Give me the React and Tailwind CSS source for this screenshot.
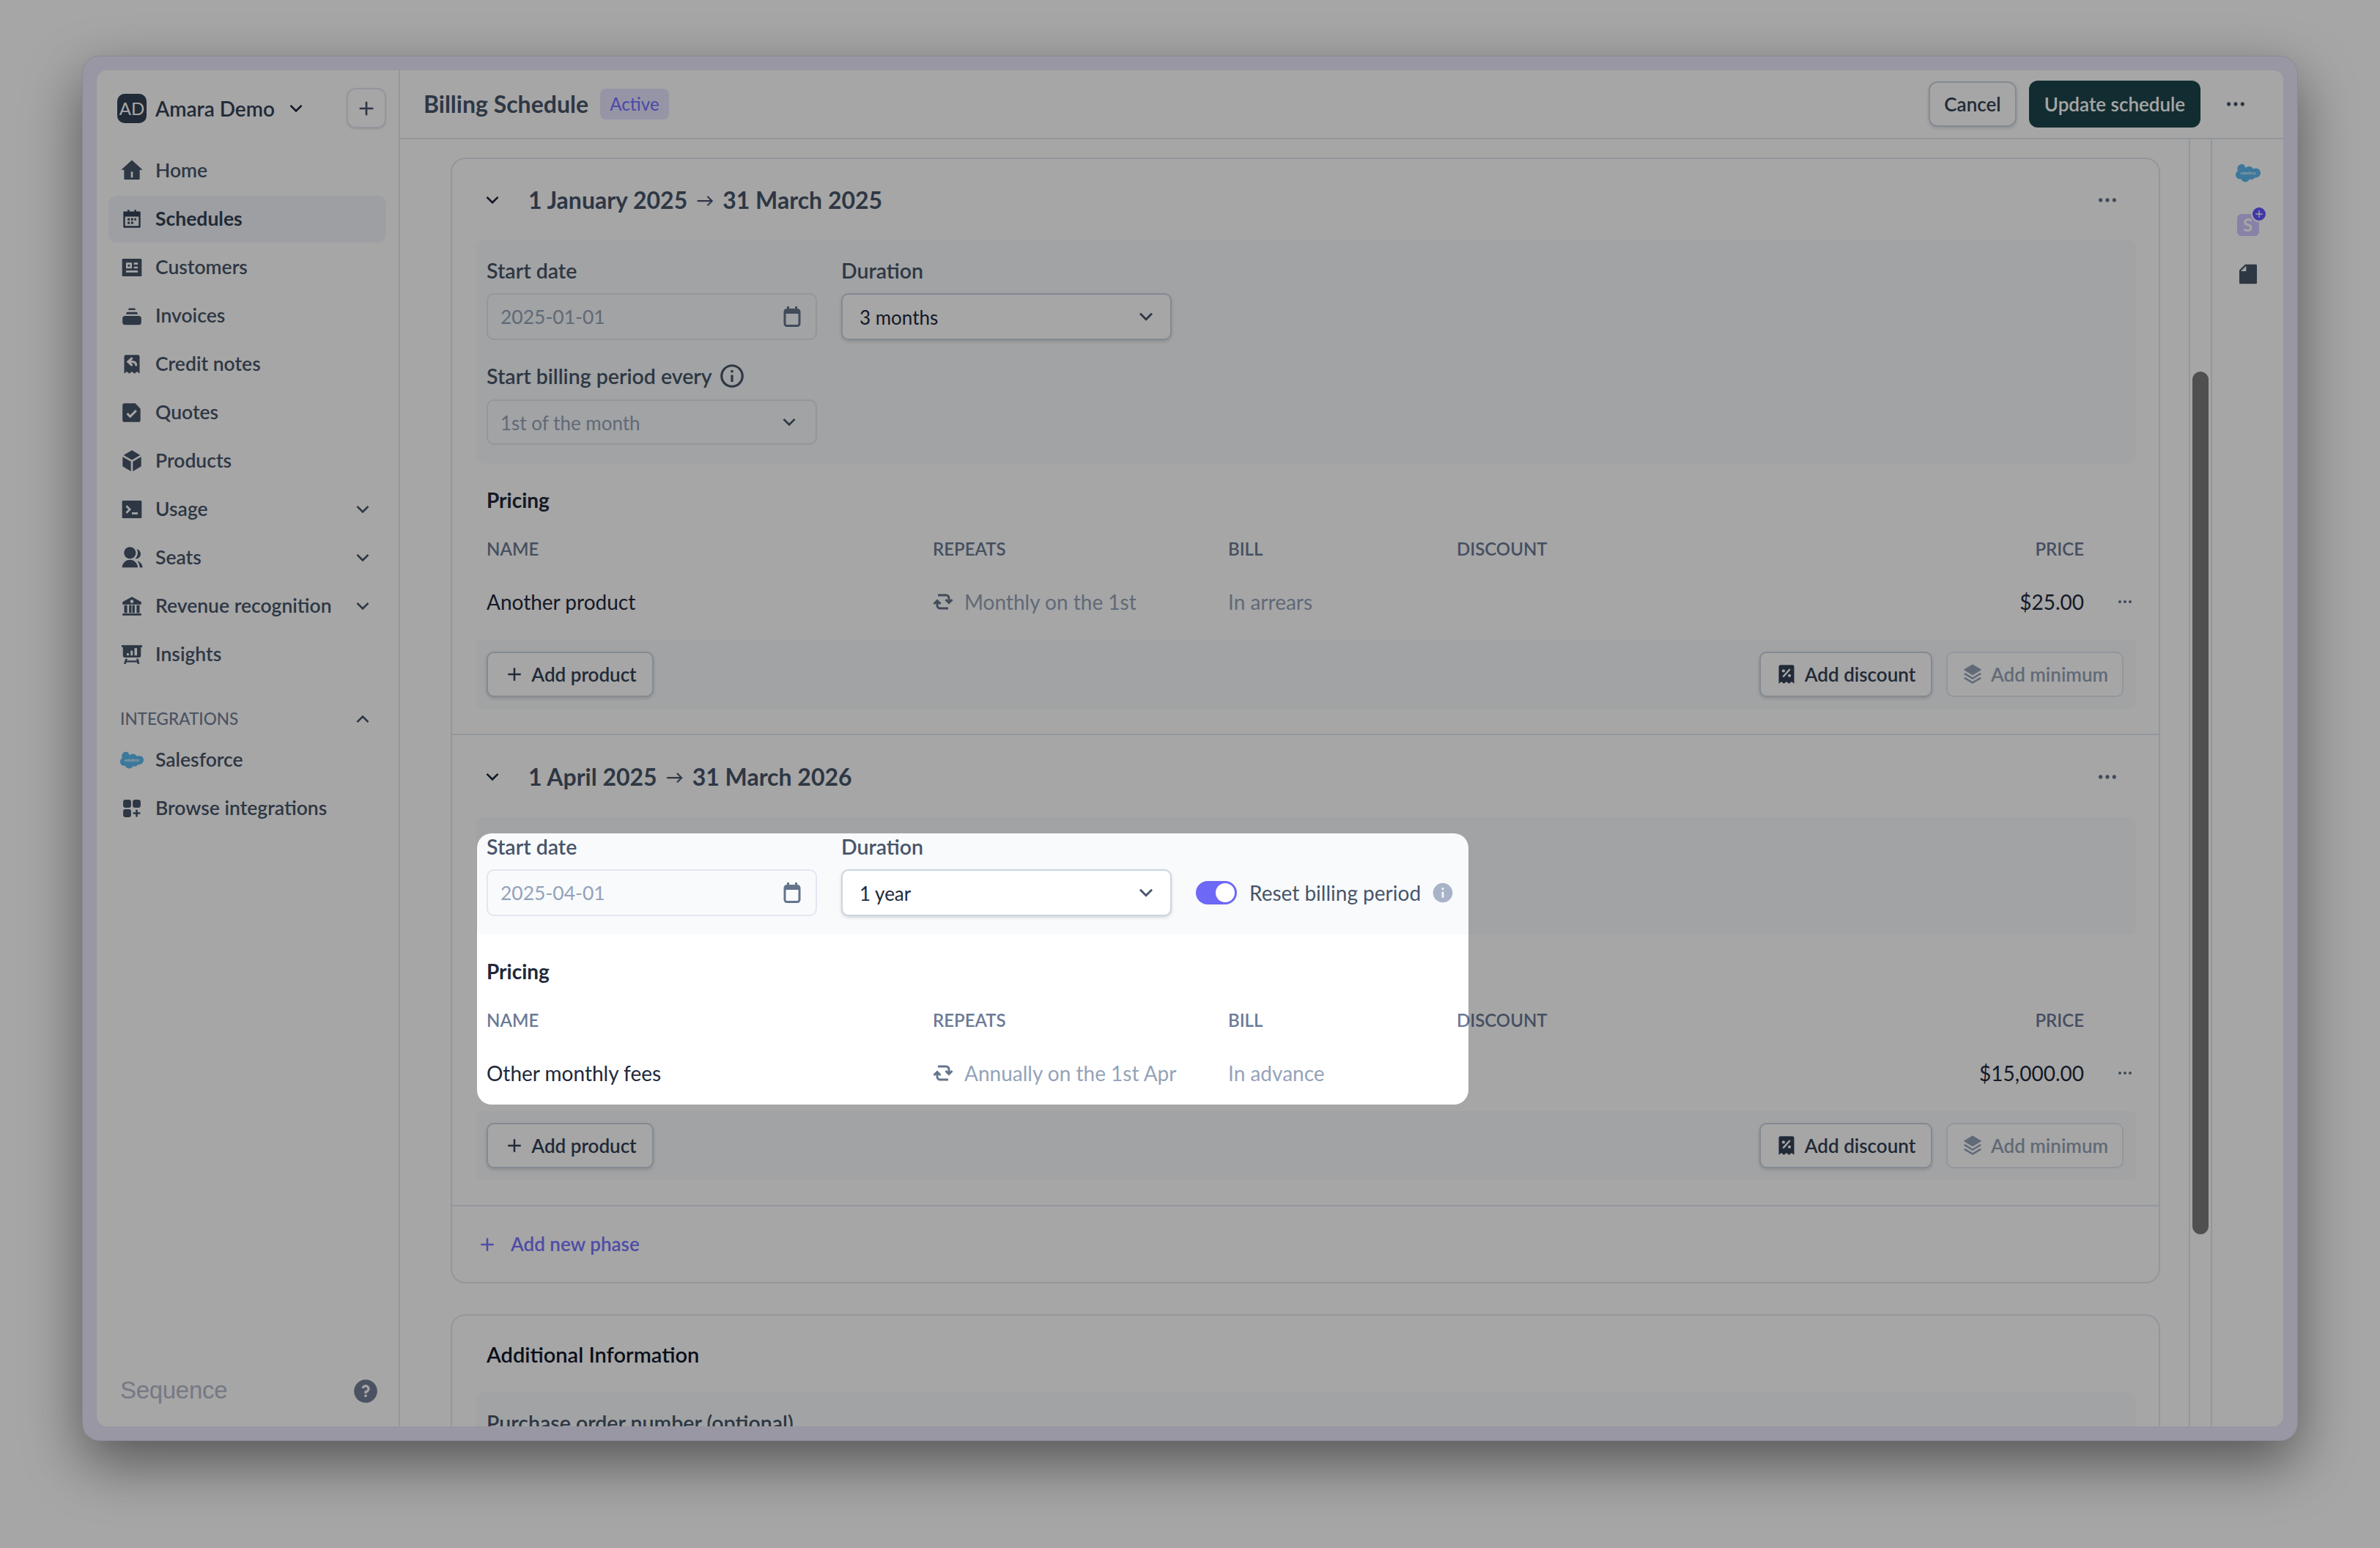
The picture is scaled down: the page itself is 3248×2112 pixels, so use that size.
import {
  RiAddLine, RiArrowDownSLine, RiArrowUpSLine, RiBox3Fill,
  RiFileFill, RiGroupFill, RiHome4Fill, RiInformationFill, RiInformationLine,
  RiMoreFill, RiProfileFill, RiQuestionFill, RiStackFill, RiTerminalBoxFill,
} from 'react-icons/ri'

const font = { fontFamily: 'Lato, "Liberation Sans", sans-serif' }

function SalesforceLogo({ className }) {
  return (
    <svg viewBox="0 0 40 28" className={className}>
      <path fill="#5cb8ee" d="M16 6c1.500-1.600 3.500-2.500 5.700-2.500 2.900 0 5.400 1.600 6.800 4 1.200-.5 2.500-.8 3.800-.8 5 0 8 3.400 7.700 7.700-.3 4.100-3.500 7.200-7.700 7.200-.6 0-1.200-.1-1.700-.2-1.100 2-3.200 3.300-5.600 3.300-1 0-2-.2-2.800-.7-1.100 2.600-3.700 4.400-6.700 4.400-3.100 0-5.800-2-6.800-4.700-.4.100-.9.100-1.400.1C3.100 23.800 0 20.700 0 16.800c0-2.600 1.400-4.900 3.500-6.100C3 9.600 2.800 8.400 2.800 7.200 2.800 3 6.200 0 10.400 0 12.900 0 14.800 2.200 16 6z" />
      <text x="20" y="16" textAnchor="middle" fontSize="6" fill="#fff" fontFamily="Lato, sans-serif" fontStyle="italic">salesforce</text>
    </svg>
  )
}

function ScheduleIcon({ className }) {
  return (
    <svg viewBox="0 0 24 24" className={className} fill="currentColor">
      <path d="M7 1h2v3H7zM15 1h2v3h-2z" />
      <path fillRule="evenodd" d="M3 3h18a1 1 0 0 1 1 1v17a1 1 0 0 1-1 1H3a1 1 0 0 1-1-1V4a1 1 0 0 1 1-1zm1 6v11h16V9z" />
      <path d="M7 11h2.500v2.500H7zM11 11h2.500v2.500H11zM15 11h2v2.500h-2zM7 15h2.500v2.500H7zM11 15h2.500v2.500H11z" />
    </svg>
  )
}

function InvoiceIcon({ className }) {
  return (
    <svg viewBox="0 0 24 24" className={className} fill="currentColor">
      <path d="M8.500 3h7l.8 2.200H7.700zM6 7.500h12l1 2.500H5z" />
      <rect x="1" y="12" width="22" height="10.500" rx="3" />
    </svg>
  )
}

function CreditNoteIcon({ className }) {
  return (
    <svg viewBox="0 0 24 24" className={className}>
      <path fill="currentColor" d="M5 1h14a2 2 0 0 1 2 2v20l-3-2.500-3 2.500-3-2.500L9 23l-3-2.500L3 23V3a2 2 0 0 1 2-2z" />
      <path fill="none" stroke="#fff" strokeWidth="2.600" d="M12.500 4.500 7.500 9l5 4.500M8 9h4.500c3 0 4.500 1.800 4.500 5" />
    </svg>
  )
}

function QuoteIcon({ className }) {
  return (
    <svg viewBox="0 0 24 24" className={className}>
      <path fill="currentColor" d="M3.500 1H16l6 6.500v13a2.500 2.500 0 0 1-2.500 2.500h-16A2.500 2.500 0 0 1 1 20.500v-17A2.500 2.500 0 0 1 3.500 1z" />
      <path fill="none" stroke="#fff" strokeWidth="2.600" d="M6.500 13l3.500 3.500 7-7" />
    </svg>
  )
}

function BankIcon({ className }) {
  return (
    <svg viewBox="0 0 24 24" className={className}>
      <path fill="currentColor" fillRule="evenodd" d="M12 1 23 7v3H1V7zm0 3.500a2 2 0 1 0 0 4 2 2 0 0 0 0-4zM3 11h3.500v9H3zM8.700 11h2.800v9H8.700zM12.500 11h2.800v9h-2.800zM17.500 11H21v9h-3.500zM1 20.500h22V23H1z" />
    </svg>
  )
}

function InsightsIcon({ className }) {
  return (
    <svg viewBox="0 0 24 24" className={className}>
      <path fill="currentColor" d="M0 1h24v2.500h-1.500v10a2 2 0 0 1-2 2h-17a2 2 0 0 1-2-2v-10H0zM4.500 17h2.500l-1 2h12l-1-2h2.500l1.500 6h-2.500l-.7-2H5.700L5 23H2.500z" />
      <path fill="#fff" d="M6 10.500h2.500V13H6zM10.500 7.500H13V13h-2.500zM15 4.500h3V13h-3z" />
    </svg>
  )
}

function BrowseIcon({ className }) {
  return (
    <svg viewBox="0 0 24 24" className={className} fill="currentColor">
      <rect x="1" y="1" width="10" height="10" rx="3" />
      <rect x="13" y="1" width="10" height="10" rx="3" />
      <rect x="1" y="13" width="10" height="10" rx="3" />
      <path d="M16.800 13.500h2.400v3.300h3.300v2.400h-3.300v3.300h-2.400v-3.300h-3.300v-2.400h3.300z" />
    </svg>
  )
}

function DiscountIcon({ className }) {
  return (
    <svg viewBox="0 0 24 24" className={className}>
      <path fill="currentColor" d="M5 1h14a2 2 0 0 1 2 2v20l-3-2.500-3 2.500-3-2.500L9 23l-3-2.500L3 23V3a2 2 0 0 1 2-2z" />
      <path stroke="#fff" strokeWidth="2.200" d="M16 6 8 15" />
      <circle cx="8.500" cy="8" r="1.800" fill="#fff" />
      <circle cx="15.500" cy="13.500" r="1.800" fill="#fff" />
    </svg>
  )
}

function CalendarIcon() {
  return (
    <svg viewBox="0 0 24 28" className="h-[28px] w-[24px] text-[#64748b]">
      <path fill="currentColor" d="M5 0h3v4H5zM16 0h3v4h-3z" />
      <rect x="2" y="4.500" width="20" height="22" rx="3" fill="none" stroke="currentColor" strokeWidth="3" />
      <path fill="currentColor" d="M2 5h20v5H2z" />
    </svg>
  )
}

function RepeatIcon() {
  return (
    <svg viewBox="0 0 28 24" className="mr-[15px] h-[24px] w-[28px] text-[#64748b]" fill="none" stroke="currentColor" strokeWidth="3">
      <path d="M7 3h11a4 4 0 0 1 4 4v6M17.500 9l4.500 4.500L26.500 9" />
      <path d="M21 21H10a4 4 0 0 1-4-4v-6M1.500 15 6 10.500l4.500 4.500" />
    </svg>
  )
}

function StripeIcon() {
  return (
    <div className="relative flex h-[30px] w-[30px] items-center justify-center rounded-[6px] bg-[#cfc8ff] text-[24px] font-bold text-white">
      S
      <span className="absolute right-[-11px] top-[-11px] flex h-[22px] w-[22px] items-center justify-center rounded-full border-2 border-white bg-[#6557ff]">
        <RiAddLine className="h-[16px] w-[16px]" />
      </span>
    </div>
  )
}

const ri = 'h-[32px] w-[32px]'
const custom = 'h-[28px] w-[28px]'

const nav = [
  { label: 'Home', icon: RiHome4Fill, size: ri },
  { label: 'Schedules', icon: ScheduleIcon, size: custom, active: true },
  { label: 'Customers', icon: RiProfileFill, size: ri },
  { label: 'Invoices', icon: InvoiceIcon, size: custom },
  { label: 'Credit notes', icon: CreditNoteIcon, size: custom },
  { label: 'Quotes', icon: QuoteIcon, size: custom },
  { label: 'Products', icon: RiBox3Fill, size: ri },
  { label: 'Usage', icon: RiTerminalBoxFill, size: ri, more: true },
  { label: 'Seats', icon: RiGroupFill, size: ri, more: true },
  { label: 'Revenue recognition', icon: BankIcon, size: custom, more: true },
  { label: 'Insights', icon: InsightsIcon, size: custom },
]

function NavItem({ item }) {
  const Icon = item.icon
  return (
    <div className={`flex h-[64px] items-center rounded-[12px] pl-[16px] pr-[16px] text-[26.500px] ${item.active ? 'bg-[#f1f5f9] font-bold text-[#334155]' : 'font-semibold text-[#475569]'}`}>
      <span className="flex h-[32px] w-[32px] shrink-0 items-center justify-center">
        <Icon className={item.size} />
      </span>
      <span className="ml-[16px] flex-1">{item.label}</span>
      {item.more && <RiArrowDownSLine className="h-[32px] w-[32px]" />}
    </div>
  )
}

function Sidebar() {
  return (
    <aside className="flex w-[414px] shrink-0 flex-col border-r-2 border-[#e2e8f0] pl-[16px] pr-[17px]">
      <div className="flex h-[79px] items-end">
        <div className="flex h-[55px] w-full items-center pl-[12px]">
          <span className="flex h-[40px] w-[40px] items-center justify-center rounded-[10px] bg-[#334155] text-[24px] text-white">AD</span>
          <span className="ml-[12px] text-[28px] font-semibold text-[#334155]">Amara Demo</span>
          <RiArrowDownSLine className="ml-[13px] h-[32px] w-[32px] text-[#1e293b]" />
          <span className="ml-auto flex h-[55px] w-[54px] items-center justify-center rounded-[12px] border-2 border-[#e2e8f0] shadow-sm">
            <RiAddLine className="h-[32px] w-[32px] text-[#475569]" />
          </span>
        </div>
      </div>
      <nav className="mt-[26px] flex flex-col gap-[2px]">
        {nav.map((item) => <NavItem key={item.label} item={item} />)}
      </nav>
      <div className="mt-[32px] flex h-[48px] items-center pl-[16px] pr-[16px] text-[22.500px] font-medium text-[#748199]">
        <span className="flex-1">INTEGRATIONS</span>
        <RiArrowUpSLine className="h-[32px] w-[32px] text-[#475569]" />
      </div>
      <div className="flex h-[64px] items-center pl-[16px] text-[26.500px] font-semibold text-[#475569]">
        <SalesforceLogo className="h-[24px] w-[32px] shrink-0" />
        <span className="ml-[16px]">Salesforce</span>
      </div>
      <div className="mt-[2px] flex h-[64px] items-center pl-[16px] text-[26.500px] font-semibold text-[#475569]">
        <span className="flex h-[32px] w-[32px] shrink-0 items-center justify-center">
          <BrowseIcon className="h-[26px] w-[26px]" />
        </span>
        <span className="ml-[16px]">Browse integrations</span>
      </div>
      <div className="mt-auto flex h-[69px] items-start pl-[16px] pr-[9px]">
        <span className="text-[33px] leading-[40px] tracking-[-0.3px] text-[#b4bac9]" style={{ fontFamily: '"Liberation Sans", sans-serif' }}>Sequence</span>
        <RiQuestionFill className="ml-auto mt-[2px] h-[38px] w-[38px] text-[#748099]" />
      </div>
    </aside>
  )
}

function Field({ label, children, info }) {
  return (
    <div className="w-[451px]">
      <div className="flex h-[32px] items-center whitespace-nowrap text-[28.500px] font-semibold text-[#475569]">
        {label}
        {info && <RiInformationLine className="ml-[8px] h-[38px] w-[38px]" />}
      </div>
      {children}
    </div>
  )
}

function DisabledInput({ value, top = 'mt-[15px]', h = 'h-[64px]', icon, text = 'text-[26.500px]' }) {
  return (
    <div className={`${top} ${h} flex items-center rounded-[10px] border-2 border-[#e2e8f0] bg-[#f8fafc] pl-[17px] pr-[20px] ${text} text-[#94a3b8]`}>
      <span className="flex-1 pt-[2px]">{value}</span>
      {icon}
    </div>
  )
}

function SelectBox({ value }) {
  return (
    <div className="mt-[15px] flex h-[64px] items-center rounded-[10px] border-2 border-[#cbd5e1] bg-white pl-[23px] pr-[16px] text-[26px] text-[#1e293b] shadow-[0_2px_4px_rgba(15,23,42,0.15)]">
      <span className="flex-1 pt-[2px]">{value}</span>
      <RiArrowDownSLine className="h-[34px] w-[34px] text-[#475569]" />
    </div>
  )
}

function Button({ icon, children, disabled, className = '' }) {
  return (
    <span className={`flex h-[62px] items-center rounded-[10px] border-2 text-[26px] font-semibold ${disabled ? 'border-[#e2e8f0] text-[#94a3b8]' : 'border-[#cbd5e1] text-[#334155] shadow-[0_2px_4px_rgba(15,23,42,0.15)]'} bg-white ${className}`}>
      {icon}
      {children}
    </span>
  )
}

const cols = 'grid grid-cols-[609px_403px_312px_1fr_auto_68px] mr-[-14px]'

function Pricing({ name, repeats, bill, price }) {
  return (
    <div className="pl-[14px] pr-[17px]">
      <div className="mt-[34px] h-[32px] text-[28px] font-bold leading-[32px] text-[#1e293b]">Pricing</div>
      <div className={`${cols} mt-[33px] h-[32px] items-center text-[24px] font-semibold text-[#6b7a96]`}>
        <span>NAME</span><span>REPEATS</span><span>BILL</span><span>DISCOUNT</span><span className="text-right">PRICE</span><span />
      </div>
      <div className={`${cols} mt-[26px] h-[64px] items-center text-[28px]`}>
        <span className="text-[#1e293b]">{name}</span>
        <span className="flex items-center whitespace-nowrap text-[#94a3b8]">
          <RepeatIcon />
          {repeats}
        </span>
        <span className="text-[#94a3b8]">{bill}</span>
        <span />
        <span className="text-right text-[#1e293b]">{price}</span>
        <span className="flex justify-end">
          <RiMoreFill className="h-[24px] w-[24px] text-[#64748b]" />
        </span>
      </div>
    </div>
  )
}

function Phase({ from, to, first, children, row }) {
  return (
    <div className={`border-b-2 border-[#e2e8f0] pb-[34px] pl-[33px] pr-[31px] ${first ? '' : 'pt-px'}`}>
      <div className="flex h-[111px] items-center pl-[6px] pr-[23px]">
        <RiArrowDownSLine className="h-[32px] w-[32px] text-[#1e293b]" />
        <span className="ml-[33px] flex flex-1 items-center text-[32px] font-bold text-[#475569]">
          {from}<span className="mx-[12px] text-[24px] font-semibold">→</span>{to}
        </span>
        <RiMoreFill className="h-[32px] w-[32px] text-[#64748b]" />
      </div>
      {children}
      <Pricing {...row} />
      <div className="mt-[20px] flex h-[94px] items-center justify-between rounded-[8px] bg-[#f8fafc] pl-[14px] pr-[17px]">
        <Button className="w-[228px] justify-center" icon={<RiAddLine className="mr-[8px] h-[30px] w-[30px]" />}>Add product</Button>
        <div className="flex gap-[19px]">
          <Button className="w-[236px] justify-center" icon={<DiscountIcon className="mr-[11px] h-[28px] w-[28px]" />}>Add discount</Button>
          <Button disabled className="w-[242px] justify-center" icon={<RiStackFill className="mr-[10px] h-[30px] w-[30px]" />}>Add minimum</Button>
        </div>
      </div>
    </div>
  )
}

function Main() {
  return (
    <div className="min-w-0 flex-1 overflow-hidden pl-[69px] pr-[39px] pt-[25px]">
      <div className="rounded-[20px] border-2 border-[#e2e8f0] bg-white">
        <Phase first from="1 January 2025" to="31 March 2025" row={{ name: 'Another product', repeats: 'Monthly on the 1st', bill: 'In arrears', price: '$25.00' }}>
          <div className="rounded-[8px] bg-[#f8fafc] pb-[25px] pl-[14px] pt-[25px]">
            <div className="flex gap-[33px]">
              <Field label="Start date"><DisabledInput value="2025-01-01" icon={<CalendarIcon />} /></Field>
              <Field label="Duration"><SelectBox value="3 months" /></Field>
            </div>
            <div className="mt-[33px]">
              <Field label="Start billing period every" info>
                <DisabledInput value="1st of the month" text="text-[26px]" top="mt-[16px]" h="h-[62px]" icon={<RiArrowDownSLine className="h-[32px] w-[32px] text-[#475569]" />} />
              </Field>
            </div>
          </div>
        </Phase>
        <Phase from="1 April 2025" to="31 March 2026" row={{ name: 'Other monthly fees', repeats: 'Annually on the 1st Apr', bill: 'In advance', price: '$15,000.00' }}>
          <div className="rounded-[8px] bg-[#f8fafc] pb-[25px] pl-[14px] pt-[24px]">
            <div className="flex items-end gap-[33px]">
              <Field label="Start date"><DisabledInput value="2025-04-01" icon={<CalendarIcon />} /></Field>
              <Field label="Duration"><SelectBox value="1 year" /></Field>
              <div className="flex h-[64px] items-center">
                <span className="flex h-[32px] w-[56px] items-center justify-end rounded-full bg-[#6d68f5] pr-[3px]">
                  <span className="h-[26px] w-[26px] rounded-full bg-white" />
                </span>
                <span className="ml-[17px] text-[28px] text-[#475569]">Reset billing period</span>
                <RiInformationFill className="ml-[14px] h-[32px] w-[32px] text-[#a8b3c7]" />
              </div>
            </div>
          </div>
        </Phase>
        <div className="flex h-[103px] items-center pl-[33px] text-[26px] font-semibold text-[#7a76ff]">
          <RiAddLine className="h-[30px] w-[30px]" />
          <span className="ml-[17px]">Add new phase</span>
        </div>
      </div>
      <div className="mt-[42px] rounded-[20px] border-2 border-[#e2e8f0] bg-white pl-[33px] pr-[31px]">
        <div className="flex h-[105px] items-center pl-[14px] text-[29px] font-semibold text-[#0f172a]">Additional Information</div>
        <div className="rounded-[8px] bg-[#f8fafc] pl-[14px] pt-[20px] text-[28.500px] font-semibold text-[#475569]">Purchase order number (optional)</div>
      </div>
    </div>
  )
}

export default function App() {
  return (
    <div className="relative h-[2112px] w-[3248px] overflow-hidden bg-white pl-[112px] pt-[76px]" style={font}>
      <div className="flex h-[1890px] w-[3024px] rounded-[24px] border border-[#d6d3e4] bg-[#ece9fb] p-[19px] shadow-[0_30px_80px_rgba(0,0,0,0.48)]">
        <div className="flex min-w-0 flex-1 overflow-hidden rounded-[14px] bg-white">
          <Sidebar />
          <div className="flex min-w-0 flex-1 flex-col">
            <header className="flex h-[94px] shrink-0 items-center border-b-2 border-[#e2e8f0] pl-[32px] pr-[49px]">
              <span className="text-[32px] font-bold text-[#475569]">Billing Schedule</span>
              <span className="ml-[16px] flex h-[42px] w-[94px] items-center justify-center rounded-[8px] bg-[#e7e5ff] text-[24px] font-medium text-[#7a76ff]">Active</span>
              <span className="ml-auto flex h-[62px] w-[120px] items-center justify-center rounded-[12px] border-2 border-[#cbd5e1] text-[26px] font-semibold text-[#334155] shadow-[0_2px_4px_rgba(15,23,42,0.15)]">Cancel</span>
              <span className="ml-[17px] flex h-[64px] w-[234px] items-center justify-center rounded-[12px] bg-[#1c464c] text-[26px] font-semibold text-white">Update schedule</span>
              <RiMoreFill className="ml-[32px] h-[32px] w-[32px] text-[#475569]" />
            </header>
            <div className="flex min-h-0 flex-1">
              <Main />
              <div className="w-[32px] shrink-0 border-x-2 border-[#e2e8f0] bg-white pt-[317px]">
                <div className="mx-auto h-[1177px] w-[22px] rounded-full bg-[#7b7b7b]" />
              </div>
              <div className="flex w-[97px] shrink-0 flex-col items-center pt-[30px]">
                <SalesforceLogo className="h-[32px] w-[34px]" />
                <div className="mt-[40px]"><StripeIcon /></div>
                <RiFileFill className="mt-[36px] h-[32px] w-[32px] text-[#475569]" />
              </div>
            </div>
          </div>
        </div>
      </div>
      {/* spotlight over the reset billing period fields */}
      <div className="pointer-events-none absolute left-[651px] top-[1137px] h-[370px] w-[1353px] rounded-[20px] shadow-[0_0_0_4000px_rgba(0,0,0,0.35)]" />
    </div>
  )
}
